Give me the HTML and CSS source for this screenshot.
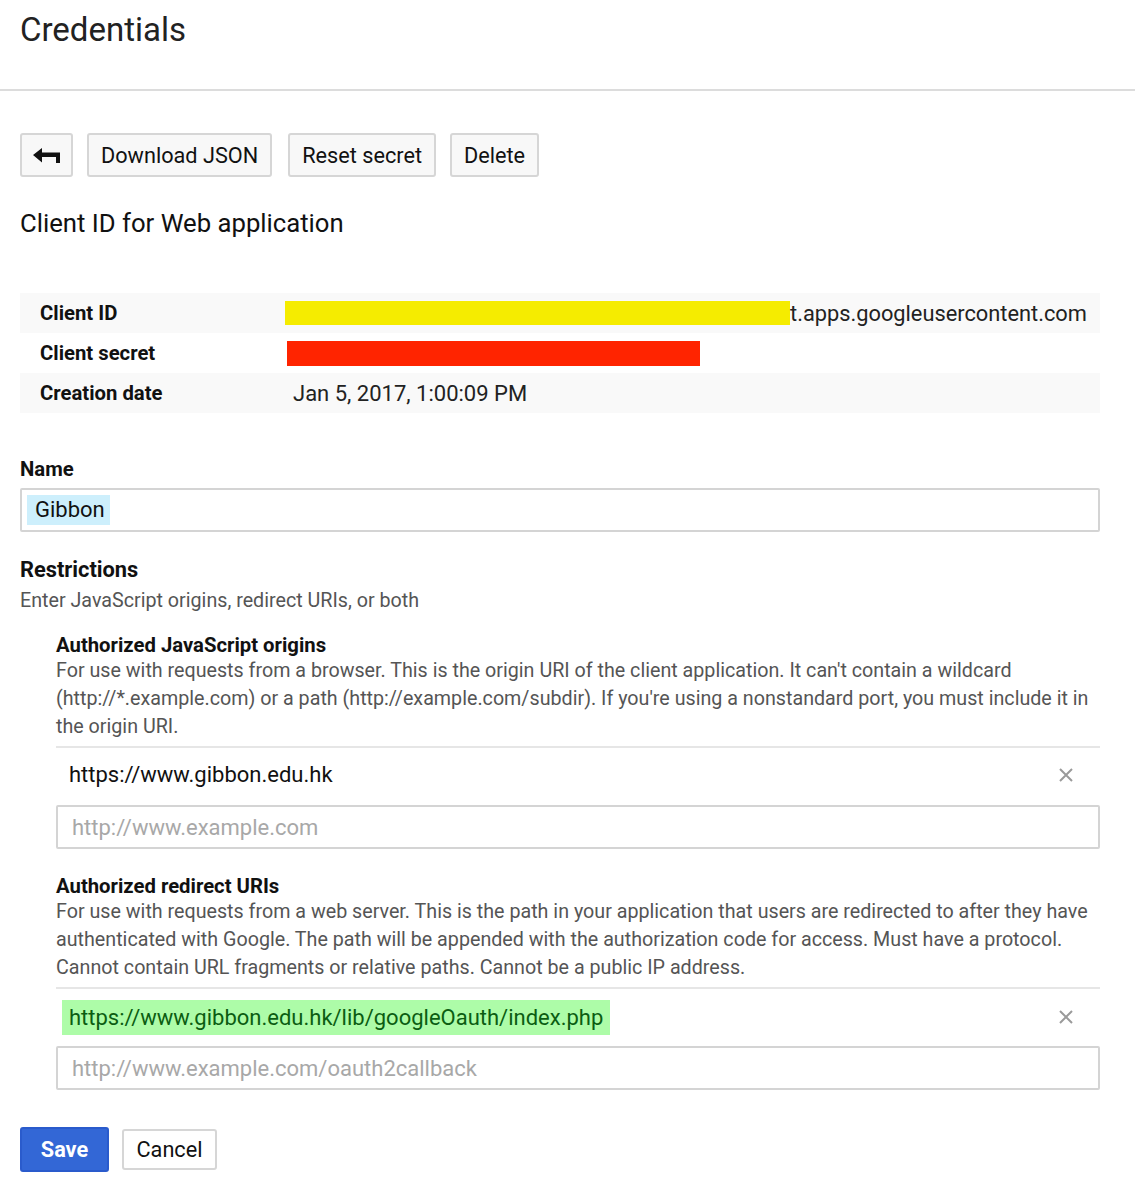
FILE: index.html
```html
<!DOCTYPE html>
<html>
<head>
<meta charset="utf-8">
<title>Credentials</title>
<link rel="stylesheet" href="styles.css">
</head>
<body>
<header class="page-header">
  <h1 class="page-title">Credentials</h1>
</header>
<main class="content">
  <div class="toolbar">
    <button class="btn btn-icon" aria-label="Back">
      <svg width="27" height="15" viewBox="0 0 27 15"><path d="M0 7 L9 0 V4.5 H27 V15 H23 V9 H9 V14.5 Z" fill="#111"/></svg>
    </button>
    <button class="btn">Download JSON</button>
    <button class="btn">Reset secret</button>
    <button class="btn">Delete</button>
  </div>

  <h2 class="section-title">Client ID for Web application</h2>

  <div class="info-table">
    <div class="info-row shaded">
      <div class="info-label">Client ID</div>
      <div class="info-value id-value"><span class="redact yellow"></span><span>t.apps.googleusercontent.com</span></div>
    </div>
    <div class="info-row">
      <div class="info-label">Client secret</div>
      <div class="info-value"><span class="redact red"></span></div>
    </div>
    <div class="info-row shaded">
      <div class="info-label">Creation date</div>
      <div class="info-value date">Jan 5, 2017, 1:00:09 PM</div>
    </div>
  </div>

  <div class="field">
    <label class="field-label">Name</label>
    <div class="input"><span class="selected">Gibbon</span></div>
  </div>

  <div class="restrictions">
    <h3 class="restrict-title">Restrictions</h3>
    <p class="restrict-sub">Enter JavaScript origins, redirect URIs, or both</p>

    <div class="sub-section">
      <h4 class="sub-title">Authorized JavaScript origins</h4>
      <p class="sub-desc">For use with requests from a browser. This is the origin URI of the client application. It can't contain a wildcard (http://*.example.com) or a path (http://example.com/subdir). If you're using a nonstandard port, you must include it in the origin URI.</p>
      <div class="uri-row">
        <span class="uri">https://www.gibbon.edu.hk</span>
        <svg class="remove" width="14" height="14" viewBox="0 0 14 14"><path d="M1 1 L13 13 M13 1 L1 13" stroke="#9a9a9a" stroke-width="2"/></svg>
      </div>
      <div class="input placeholder">http://www.example.com</div>
    </div>

    <div class="sub-section second">
      <h4 class="sub-title">Authorized redirect URIs</h4>
      <p class="sub-desc">For use with requests from a web server. This is the path in your application that users are redirected to after they have authenticated with Google. The path will be appended with the authorization code for access. Must have a protocol. Cannot contain URL fragments or relative paths. Cannot be a public IP address.</p>
      <div class="uri-row green-row">
        <span class="uri green">https://www.gibbon.edu.hk/lib/googleOauth/index.php</span>
        <svg class="remove" width="14" height="14" viewBox="0 0 14 14"><path d="M1 1 L13 13 M13 1 L1 13" stroke="#9a9a9a" stroke-width="2"/></svg>
      </div>
      <div class="input placeholder">http://www.example.com/oauth2callback</div>
    </div>
  </div>

  <div class="actions">
    <button class="btn btn-primary">Save</button>
    <button class="btn btn-cancel">Cancel</button>
  </div>
</main>
</body>
</html>
```
FILE: styles.css
```css
* { box-sizing: border-box; }
html, body { margin: 0; padding: 0; background: #fff; }
body {
  font-family: Roboto, "Liberation Sans", Arial, sans-serif;
  color: #111;
}
.page-header {
  height: 91px;
  padding: 10px 20px 0;
  border-bottom: 2px solid #dcdcdc;
}
.page-title {
  margin: 0;
  font-size: 33px;
  font-weight: 400;
  line-height: 40px;
  color: #222;
}
.content { padding: 42px 35px 20px 20px; }
.toolbar { display: flex; gap: 14px; }
.toolbar .btn:nth-child(3) { margin-left: 2px; }
.btn {
  font-family: inherit;
  font-size: 21.7px;
  color: #111;
  background: #f8f8f8;
  border: 2px solid #d6d6d6;
  border-radius: 3px;
  height: 44px;
  padding: 0 12px;
  cursor: pointer;
}
.btn-icon { width: 53px; padding: 0; display: flex; align-items: center; justify-content: center; }
.section-title {
  margin: 30px 0 0;
  font-size: 25.7px;
  font-weight: 400;
  line-height: 32px;
  color: #111;
}
.info-table { margin-top: 54px; width: 1080px; }
.info-row { display: flex; height: 40px; align-items: center; }
.info-row.shaded { background: #f9f9f9; }
.info-label { width: 265px; padding-left: 20px; font-size: 20.3px; font-weight: 700; color: #111; }
.info-value { font-size: 22px; display: flex; align-items: center; color: #222; }
.id-value { font-size: 21.8px; }
.redact { display: inline-block; height: 24px; }
.redact.yellow { width: 505px; background: #f5ec00; }
.redact.red { width: 413px; height: 25px; background: #ff2400; margin-left: 2px; }
.date { padding-left: 8px; }
.field { margin-top: 44px; }
.field-label { display: block; font-size: 20.3px; font-weight: 700; line-height: 24px; color: #111; }
.input {
  margin-top: 7px;
  height: 44px;
  border: 2px solid #d4d4d4;
  border-radius: 2px;
  padding: 3px 5px;
  font-size: 22px;
  display: flex;
  align-items: center;
  color: #111;
}
.selected { background: #cdeffc; padding: 0 5px 0 8px; line-height: 30px; }
.restrictions { margin-top: 25px; }
.restrict-title { margin: 0; font-size: 21.8px; font-weight: 700; line-height: 26px; color: #111; }
.restrict-sub { margin: 6px 0 0; font-size: 19.7px; line-height: 24px; color: #555; }
.sub-section { margin: 20px 0 0 36px; }
.sub-section.second { margin-top: 25px; }
.sub-title { margin: 0; font-size: 20.3px; font-weight: 700; line-height: 24px; color: #111; }
.sub-desc { margin: 0; font-size: 19.7px; line-height: 28px; color: #555; }
.uri-row {
  margin-top: 5px;
  border-top: 2px solid #e6e6e6;
  display: flex;
  align-items: center;
  justify-content: space-between;
  height: 55px;
  padding: 0 27px 0 13px;
}
.green-row { padding-top: 3px; height: 55px; }
.uri { font-size: 22px; color: #111; }
.uri.green { background: #adfca8; color: #0b5d12; padding: 3px 7px 3px 7px; margin-left: -7px; line-height: 29px; }
.remove { display: block; }
.input.placeholder { margin-top: 4px; height: 44px; color: #a8a8a8; padding-left: 14px; }
.actions { margin-top: 37px; display: flex; gap: 13px; align-items: center; }
.btn-primary {
  background: #3367d6;
  border: 2px solid #2a5bcc;
  color: #fff;
  font-weight: 700;
  width: 89px;
  height: 45px;
}
.btn-cancel { background: #fff; height: 41px; width: 95px; padding: 0; }
```
